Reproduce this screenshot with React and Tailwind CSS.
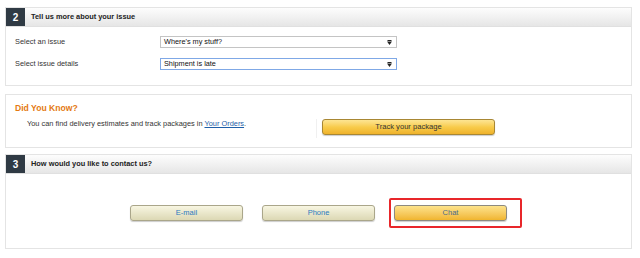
import React from 'react'

const font = { fontFamily: '"Liberation Sans", Arial, sans-serif' }

function StepHeader({ num, title }) {
  return (
    <div className="flex h-[19px] items-stretch bg-gradient-to-b from-[#fdfdfd] to-[#e6e6e6] border-b border-[#e0e0e0]">
      <div className="w-[19px] bg-[#2f3a44] text-white text-[10px] font-bold flex items-center justify-center">
        {num}
      </div>
      <div className="pl-[6px] flex items-center text-[7.4px] font-bold text-[#222]">{title}</div>
    </div>
  )
}

function Arrow() {
  return (
    <svg width="5" height="5" viewBox="0 0 5 5" className="block">
      <rect x="0.5" y="0" width="4" height="1" fill="#222" />
      <path d="M0 1.5 H5 L2.5 5 Z" fill="#222" />
    </svg>
  )
}

function FakeSelect({ value, focused }) {
  return (
    <div
      className={`w-[237px] h-[12px] flex items-center justify-between pl-[3px] pr-[4px] bg-white text-[7.3px] text-[#111] border ${
        focused ? 'border-[#7fa8e6]' : 'border-[#c4c4c4]'
      }`}
    >
      <span className="leading-none">{value}</span>
      <Arrow />
    </div>
  )
}

function BeigeButton({ label }) {
  return (
    <div className="w-[113px] h-[16px] rounded-[3px] border border-[#aaa68a] bg-gradient-to-b from-[#f8f6e2] to-[#dcd8b4] shadow-[0_1px_1px_rgba(0,0,0,0.2)] flex items-center justify-center text-[7.5px] text-[#2b7bc0]">
      {label}
    </div>
  )
}

export default function App() {
  return (
    <div className="w-[640px] h-[258px] bg-white overflow-hidden" style={font}>
      {/* Step 2 */}
      <div className="ml-[5px] mt-[7px] w-[627px] h-[79px] border border-[#e4e4e4]">
        <StepHeader num="2" title="Tell us more about your issue" />
        <div className="pl-[9px] pt-[9px] flex flex-col gap-[10px]">
          <div className="flex items-center h-[12px]">
            <div className="w-[145px] text-[7.4px] text-[#333]">Select an issue</div>
            <FakeSelect value="Where's my stuff?" />
          </div>
          <div className="flex items-center h-[12px]">
            <div className="w-[145px] text-[7.4px] text-[#333]">Select issue details</div>
            <FakeSelect value="Shipment is late" focused />
          </div>
        </div>
      </div>

      {/* Did you know */}
      <div className="ml-[5px] mt-[8px] w-[627px] h-[54px] border border-[#e4e4e4] pl-[9px] pt-[8px]">
        <div className="text-[8.6px] font-bold text-[#e47911] leading-[11px]">Did You Know?</div>
        <div className="flex items-start mt-[5px]">
          <div className="w-[301px] pl-[12px] text-[7.4px] leading-[10px] text-[#333]">
            You can find delivery estimates and track packages in{' '}
            <span className="text-[#1f5fa8] underline">Your Orders</span>.
          </div>
          <div className="border-l border-[#f0f0f0] pl-[5px] h-[19px]">
            <div className="w-[173px] h-[16px] rounded-[3px] border border-[#a88734] bg-gradient-to-b from-[#fde592] via-[#f8cc4b] to-[#efb22a] shadow-[0_1px_1px_rgba(0,0,0,0.2)] flex items-center justify-center text-[7.6px] text-[#333]">
              Track your package
            </div>
          </div>
        </div>
      </div>

      {/* Step 3 */}
      <div className="ml-[5px] mt-[6px] w-[627px] h-[95px] border border-[#e4e4e4]">
        <StepHeader num="3" title="How would you like to contact us?" />
        <div className="flex items-start pl-[124px] pt-[24px]">
          <div className="pt-[7px] flex gap-[19px]">
            <BeigeButton label="E-mail" />
            <BeigeButton label="Phone" />
          </div>
          <div className="ml-[14px] w-[133px] h-[30px] border-2 border-[#e8262a] rounded-[2px] pl-[3px] pt-[5px]">
            <div className="w-[113px] h-[16px] rounded-[3px] border border-[#8d8a80] bg-gradient-to-b from-[#fde38a] to-[#f0b52c] shadow-[0_1px_1px_rgba(0,0,0,0.2)] flex items-center justify-center text-[7.5px] text-[#4a6a8c]">
              Chat
            </div>
          </div>
        </div>
      </div>
    </div>
  )
}
